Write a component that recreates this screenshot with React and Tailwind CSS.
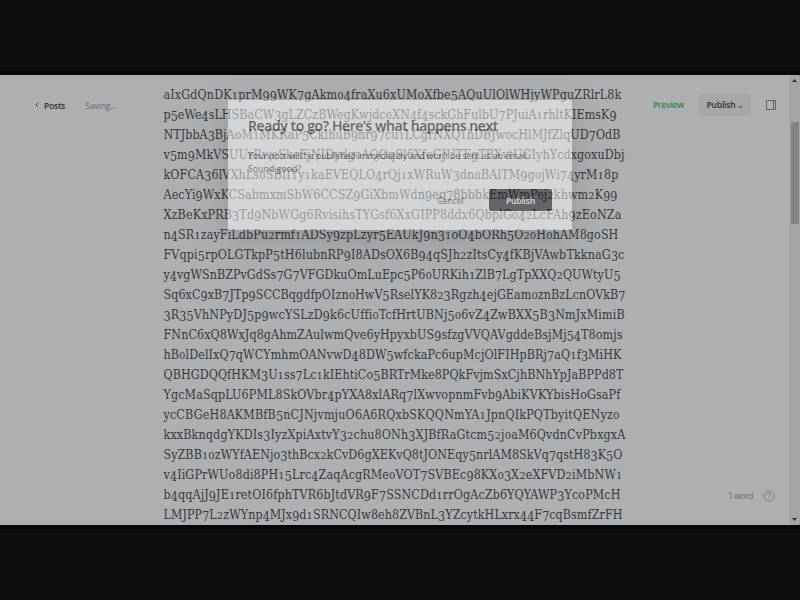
import { useLayoutEffect, useRef } from "react";

// Each entry: the line's text and its rendered width in pixels.
const LINES = [
  ["aIxGdQnDK1prM99WK7gAkm04fraXu6xUMoXfbe5AQuUlOlWHjyWPguZRlrL8k", 458],
  ["p5eWe4sLHSBaCW3gLZCzBWegKwjdceXN4f4sckGhFulbU7PJuiA1rhltKIEmsK9", 453],
  ["NTJbbA3BjAoM1MKRaP5CklhuB9nr97cu1LCgrNXQ1hDBJwocHlMJfZlqUD7OdB", 457],
  ["v5m9MkVSUUrRweSkeFjNIDydg0AQOqSl6XfeGJUTFgTBXvtUGIyhYcdxgoxuDbj", 461],
  ["kOFCA36lVXhLs0SBIIYy1kaEVEQLO4rQj1xWRuW3dnaBAlTM9g0jWi74yrM18p", 455],
  ["AecYi9WxKCSabmxmSbW6CCSZ9GiXbmWdn9eg78bbbkEmWmPej2khwm2K99", 454],
  ["XzBeKxPRB3Td9NbWGg6RvisihsTYGsf6XxGIPP8ddx6QbplG042LcFAh9zEoNZa", 458],
  ["n4SR1zayFiLdbPu2rmf1ADSy9zpLzyr5EAUkJ9n31oO4bORh5O20H0hAM8goSH", 455],
  ["FVqpi5rpOLGTkpP5tH6lubnRP9I8ADsOX6B94qSJh2zItsCy4fKBjVAwbTkknaG3c", 461],
  ["y4vgWSnBZPvGdSs7G7VFGDkuOmLuEpc5P60URKih1ZlB7LgTpXXQ2QUWtyU5", 457],
  ["Sq6xC9xB7JTp9SCCBqgdfpOIzn0HwV5RselYK823Rgzh4ejGEam0znBzLcnOVkB7", 462],
  ["3R35VhNPyDJ5p9wcYSLzD9k6cUffi0TcfHrtUBNj506vZ4ZwBXX5B3NmJxMimiB", 461],
  ["FNnC6xQ8WxJq8gAhmZAulwmQve6yHpyxbUS9sfzgVVQAVgddeBsjMj54T8omjs", 459],
  ["hB0lDelIxQ7qWCYmhmOANvwD48DW5wfckaPc6upMcjOlFIHpBRj7aQ1f3MiHK", 458],
  ["QBHGDQQfHKM3U1ss7Lc1kIEhtiCo5BRTrMke8PQkFvjmSxCjhBNhYpJaBPPd8T", 460],
  ["YgcMaSqpLU6PML8SkOVbr4pYXA8xlARq7lXwvopnmFvb9AbiKVKYbisHoGsaPf", 457],
  ["ycCBGeH8AKMBfB5nCJNjvmjuO6A6RQxbSKQQNmYA1JpnQIkPQTbyitQENyz0", 456],
  ["kxxBknqdgYKDIs3IyzXpiAxtvY32chu8ONh3XJBfRaGtcm52j0aM6QvdnCvPbxgxA", 462],
  ["SyZBB10zWYfAENjo3thBcx2kCvD6gXEKvQ8tJONEqy5nrlAM8SkVq7qstH83K5O", 459],
  ["v4IiGPrWUo8di8PH15Lrc4ZaqAcgRMe0VOT7SVBEc98KX03X2eXFVD2iMbNW1", 459],
  ["b4qqAjJ9JE1retOI6fphTVR6bJtdVR9F7SSNCDd1rrOgAcZb6YQYAWP3YcoPMcH", 457],
  ["LMJPP7L2zWYnp4MJx9d1SRNCQIw8eh8ZVBnL3YZcytkHLxrx44F7cqBsmfZrFH", 459],
];

// Old-style figures: 0-2 sit at x-height, 3 4 5 7 9 hang below the baseline.
function figures(text) {
  return text.split(/([012]+|[34579]+)/).map((part, i) => {
    if (/^[012]/.test(part)) {
      return (
        <span key={i} className="font-['DejaVu_Serif',serif] text-[10px] leading-none">
          {part}
        </span>
      );
    }
    if (/^[34579]/.test(part)) {
      return (
        <span key={i} className="align-[-2px] leading-none">
          {part}
        </span>
      );
    }
    return part;
  });
}

// Single line of text whose tracking is adjusted to fill the given width.
function Fit({ text, width, oldstyle = false, className = "" }) {
  const ref = useRef(null);
  useLayoutEffect(() => {
    const el = ref.current;
    el.style.letterSpacing = "0px";
    const natural = el.getBoundingClientRect().width;
    el.style.letterSpacing = `${(width - natural) / text.length}px`;
  }, [text, width]);
  return (
    <span ref={ref} className={`inline-block whitespace-nowrap ${className}`}>
      {oldstyle ? figures(text) : text}
    </span>
  );
}

function Modal() {
  return (
    <div className="absolute left-[228px] top-[25px] h-[130px] w-[344px] bg-white px-5 opacity-[0.48] shadow-[0_10px_30px_rgba(0,0,0,0.3)]">
      <h1 className="mt-[15px] h-[22px] text-[14px] leading-[22px] font-semibold text-[#15171a]">
        <Fit text="Ready to go? Here’s what happens next" width={250} />
      </h1>
      <p className="mt-[12px] text-[9px] leading-[13px] text-[#394047]">
        <Fit text="Your post will be published immediately and won’t be sent as an email." width={281} />
        <br />
        <Fit text="Sound good?" width={53} />
      </p>
      <div className="mt-[14px] flex justify-end gap-[7px]">
        <button className="h-[22px] w-[63px] rounded-[2px] bg-[#f4f7f8] text-[8.5px] leading-[23px] text-[#394047]">
          <Fit text="Cancel" width={26} />
        </button>
        <button className="h-[22px] w-[63px] rounded-[2px] bg-[#15171a] text-[8.5px] leading-[23px] font-semibold text-white">
          <Fit text="Publish" width={29} />
        </button>
      </div>
    </div>
  );
}

export default function App() {
  return (
    <div className="flex h-[600px] w-[800px] flex-col overflow-hidden bg-[#0e0e0e] font-['Open_Sans','Noto_Sans',sans-serif]">
      <div className="h-[75px] shrink-0 border-b-4 border-[#080808]" />
      <main className="relative flex h-[450px] shrink-0 overflow-hidden bg-[#adafb1]">
        <div className="flex w-[163.5px] shrink-0 items-start pt-[23px] pl-[35px] text-[8.5px] leading-[16px]">
          <svg className="mt-[4px] mr-[5px] h-[6px] w-[4px]" viewBox="0 0 5 7" fill="none" stroke="#303338" strokeWidth="1.1">
            <path d="M3.8 .8 1.1 3.5l2.7 2.7" />
          </svg>
          <Fit text="Posts" width={21} className="font-semibold text-[#303338]" />
          <Fit text="Saving..." width={32} className="ml-[20px] text-[#666d73]" />
        </div>

        <article className="w-[489.5px] shrink-0 pt-[10px] font-['DejaVu_Serif_Condensed','DejaVu_Serif',serif] text-[12.4px] text-[#36393d]">
          {LINES.map(([text, width]) => (
            <div key={text} className="h-5 leading-5">
              <Fit text={text} width={width} oldstyle />
            </div>
          ))}
        </article>

        <div className="flex w-[136px] shrink-0 flex-col justify-between">
          <div className="mt-[19px] flex h-[22px] items-center text-[8.5px] font-semibold">
            <Fit text="Preview" width={31} className="text-[#2b8745]" />
            <div className="ml-[14px] flex h-[22px] w-[53px] items-center justify-center gap-[2px] rounded-[2px] bg-[#a5a7a9] text-[#303338]">
              <Fit text="Publish" width={29} />
              <svg className="mt-[3px] h-[4px] w-[5px]" viewBox="0 0 5 4" fill="none" stroke="#303338" strokeWidth=".9">
                <path d="M.3.8 2.5 3 4.7.8" />
              </svg>
            </div>
            <svg className="ml-[15px] h-[10px] w-[10px]" viewBox="0 0 10 10" fill="none" stroke="#5f6366" strokeWidth="1">
              <path d="M.5.5h9v9h-9zM7.5.5v9" />
            </svg>
          </div>
          <div className="flex items-center justify-end gap-[10px] pr-[14px] pb-[23px] text-[8.5px] leading-[12px] text-[#666d73]">
            <Fit text="1 word" width={25} />
            <svg className="h-[12px] w-[12px]" viewBox="0 0 12 12" fill="none" stroke="#73797e" strokeWidth=".9">
              <circle cx="6" cy="6" r="5" />
              <path d="M4.5 4.8a1.5 1.5 0 1 1 2.3 1.3c-.6.3-.8.5-.8 1M6 8v.9" />
            </svg>
          </div>
        </div>

        <div className="flex w-[11px] shrink-0 flex-col items-center bg-[#a4a5a7]">
          <svg className="mt-[4px] h-[3px] w-[5px]" viewBox="0 0 5 3" fill="#303338">
            <path d="M0 3 2.5 0 5 3z" />
          </svg>
          <div className="mt-[40px] h-[102px] w-[8px] bg-[#818385]" />
          <svg className="mt-auto mb-[4px] h-[3px] w-[5px]" viewBox="0 0 5 3" fill="#303338">
            <path d="M0 0 2.5 3 5 0z" />
          </svg>
        </div>

        <Modal />
      </main>
      <div className="h-[75px] shrink-0 border-t-4 border-[#080808]" />
    </div>
  );
}
